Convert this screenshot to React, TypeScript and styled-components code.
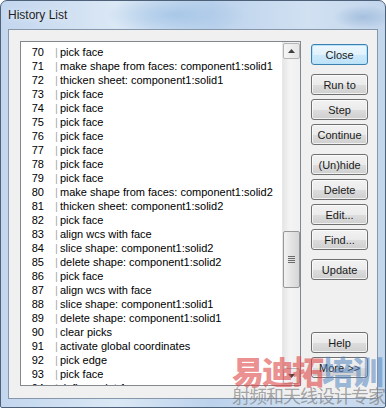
import React from 'react'
import styled, { createGlobalStyle, css } from 'styled-components'

const GlobalStyle = createGlobalStyle`
  html, body {
    margin: 0;
    padding: 0;
    background: #ffffff;
  }
  body {
    font-family: 'Liberation Sans', Arial, sans-serif;
  }
`

const Window = styled.div`
  position: relative;
  width: 386px;
  height: 408px;
  box-sizing: border-box;
  padding: 28px 7px 8px 7px;
  border: 1px solid #4d6179;
  border-radius: 7px 7px 2px 2px;
  background:
    radial-gradient(ellipse 70px 20px at 175px 14px, rgba(160, 195, 230, 0.8), transparent),
    radial-gradient(ellipse 30px 12px at 362px 16px, rgba(150, 180, 215, 0.7), transparent),
    linear-gradient(to right, #c2d6ee 0%, #dbe8f5 30%, #bcd2ec 55%, #d1e1f2 80%, #c3d6ec 100%);
  overflow: hidden;
`

const Title = styled.div`
  position: absolute;
  top: 7px;
  left: 7px;
  font-size: 12px;
  color: #1e1e1e;
  text-shadow: 0 0 6px rgba(255, 255, 255, 0.9);
`

const Client = styled.div`
  display: flex;
  gap: 10px;
  height: 100%;
  box-sizing: border-box;
  padding: 11px 9px 14px 11px;
  background: #f0f0f0;
  border: 1px solid #8696ab;
`

const ListBox = styled.div`
  display: flex;
  width: 282px;
  height: 345px;
  box-sizing: border-box;
  border: 1px solid #828790;
  background: #ffffff;
`

const Rows = styled.div`
  flex: 1;
  overflow: hidden;
  padding-top: 3px;
`

const Row = styled.div`
  display: flex;
  height: 14px;
  line-height: 14px;
  font-size: 11px;
  color: #000000;
  white-space: nowrap;
`

const Num = styled.span`
  width: 23px;
  text-align: right;
`

const Sep = styled.span`
  width: 5px;
  margin-left: 11px;
  color: #a8a8a8;
`

const ScrollBar = styled.div`
  display: flex;
  flex-direction: column;
  width: 17px;
  background: linear-gradient(to right, #e6e6e6, #f4f4f4 40%, #f0f0f0);
  border-left: 1px solid #e8e8e8;
`

const ArrowBtn = styled.div`
  display: flex;
  align-items: center;
  justify-content: center;
  height: 16px;
  margin: 1px 0;
  box-sizing: border-box;
  border: 1px solid #b5b5b5;
  border-radius: 2px;
  background: linear-gradient(to right, #f5f5f5, #e6e6e6);
`

const Track = styled.div`
  flex: 1;
  position: relative;
`

const Thumb = styled.div<{ $top: number; $h: number }>`
  position: absolute;
  left: 0;
  right: 0;
  top: ${(p) => p.$top}px;
  height: ${(p) => p.$h}px;
  box-sizing: border-box;
  display: flex;
  align-items: center;
  justify-content: center;
  border: 1px solid #979797;
  border-radius: 2px;
  background: linear-gradient(to right, #f2f2f2, #e3e3e3 50%, #d6d6d6);
`

const Buttons = styled.div`
  display: flex;
  flex-direction: column;
  width: 57px;
  padding: 3px 0 6px;
`

const Group = styled.div<{ $push?: boolean }>`
  display: flex;
  flex-direction: column;
  gap: 4px;
  margin-bottom: 9px;
  ${(p) =>
    p.$push &&
    css`
      margin-top: auto;
      margin-bottom: 0;
    `}
`

const Button = styled.div<{ $default?: boolean }>`
  height: 21px;
  box-sizing: border-box;
  display: flex;
  align-items: center;
  justify-content: center;
  font-size: 11px;
  color: #1a1a1a;
  border: 1px solid #707070;
  border-radius: 3px;
  background: linear-gradient(to bottom, #f2f2f2 0%, #ebebeb 50%, #dddddd 51%, #cfcfcf 100%);
  box-shadow: inset 0 0 0 1px rgba(255, 255, 255, 0.7);
  ${(p) =>
    p.$default &&
    css`
      border-color: #3c7fb1;
      background: linear-gradient(to bottom, #eef7fd 0%, #e1f2fc 50%, #cdeafb 51%, #bfe2f7 100%);
      box-shadow: inset 0 0 0 1px #b6e3fa;
    `}
`

const Watermark = styled.div`
  position: absolute;
  left: 231px;
  bottom: 2px;
  display: flex;
  flex-direction: column;
  align-items: flex-start;
  pointer-events: none;
  font-family: 'Noto Sans CJK SC', sans-serif;
`

const MarkBig = styled.div`
  font-size: 32px;
  font-weight: 900;
  line-height: 30px;
  letter-spacing: -2px;
`

const Red = styled.span`
  color: rgba(222, 70, 70, 0.62);
`

const Blue = styled.span`
  color: rgba(80, 130, 190, 0.55);
`

const MarkSmall = styled.div`
  font-size: 18px;
  line-height: 20px;
  color: rgba(120, 120, 120, 0.65);
  letter-spacing: -1px;
`

const rows: [number, string][] = [
  [70, 'pick face'],
  [71, 'make shape from faces: component1:solid1'],
  [72, 'thicken sheet: component1:solid1'],
  [73, 'pick face'],
  [74, 'pick face'],
  [75, 'pick face'],
  [76, 'pick face'],
  [77, 'pick face'],
  [78, 'pick face'],
  [79, 'pick face'],
  [80, 'make shape from faces: component1:solid2'],
  [81, 'thicken sheet: component1:solid2'],
  [82, 'pick face'],
  [83, 'align wcs with face'],
  [84, 'slice shape: component1:solid2'],
  [85, 'delete shape: component1:solid2'],
  [86, 'pick face'],
  [87, 'align wcs with face'],
  [88, 'slice shape: component1:solid1'],
  [89, 'delete shape: component1:solid1'],
  [90, 'clear picks'],
  [91, 'activate global coordinates'],
  [92, 'pick edge'],
  [93, 'pick face'],
  [94, 'define point 1'],
]

const Arrow = ({ up }: { up?: boolean }) => (
  <svg width="7" height="4" viewBox="0 0 7 4">
    <polygon points={up ? '0,4 3.5,0 7,4' : '0,0 3.5,4 7,0'} fill="#404040" />
  </svg>
)

const Grip = () => (
  <svg width="7" height="8" viewBox="0 0 7 8">
    {[0, 2, 4, 6].map((y) => (
      <rect key={y} x="0" y={y} width="7" height="1" fill="#6a6a6a" />
    ))}
  </svg>
)

const App = () => {
  return (
    <Window>
      <GlobalStyle />
      <Title>History List</Title>
      <Client>
        <ListBox>
          <Rows>
            {rows.map(([n, text]) => (
              <Row key={n}>
                <Num>{n}</Num>
                <Sep>|</Sep>
                <span>{text}</span>
              </Row>
            ))}
          </Rows>
          <ScrollBar>
            <ArrowBtn>
              <Arrow up />
            </ArrowBtn>
            <Track>
              <Thumb $top={171} $h={57}>
                <Grip />
              </Thumb>
            </Track>
            <ArrowBtn>
              <Arrow />
            </ArrowBtn>
          </ScrollBar>
        </ListBox>
        <Buttons>
          <Group>
            <Button $default>Close</Button>
          </Group>
          <Group>
            <Button>Run to</Button>
            <Button>Step</Button>
            <Button>Continue</Button>
          </Group>
          <Group>
            <Button>(Un)hide</Button>
            <Button>Delete</Button>
            <Button>Edit...</Button>
            <Button>Find...</Button>
          </Group>
          <Group>
            <Button>Update</Button>
          </Group>
          <Group $push>
            <Button>Help</Button>
            <Button>More &gt;&gt;</Button>
          </Group>
        </Buttons>
      </Client>
      <Watermark>
        <MarkBig>
          <Red>易迪拓</Red>
          <Blue>培训</Blue>
        </MarkBig>
        <MarkSmall>射频和天线设计专家</MarkSmall>
      </Watermark>
    </Window>
  )
}

export default App
